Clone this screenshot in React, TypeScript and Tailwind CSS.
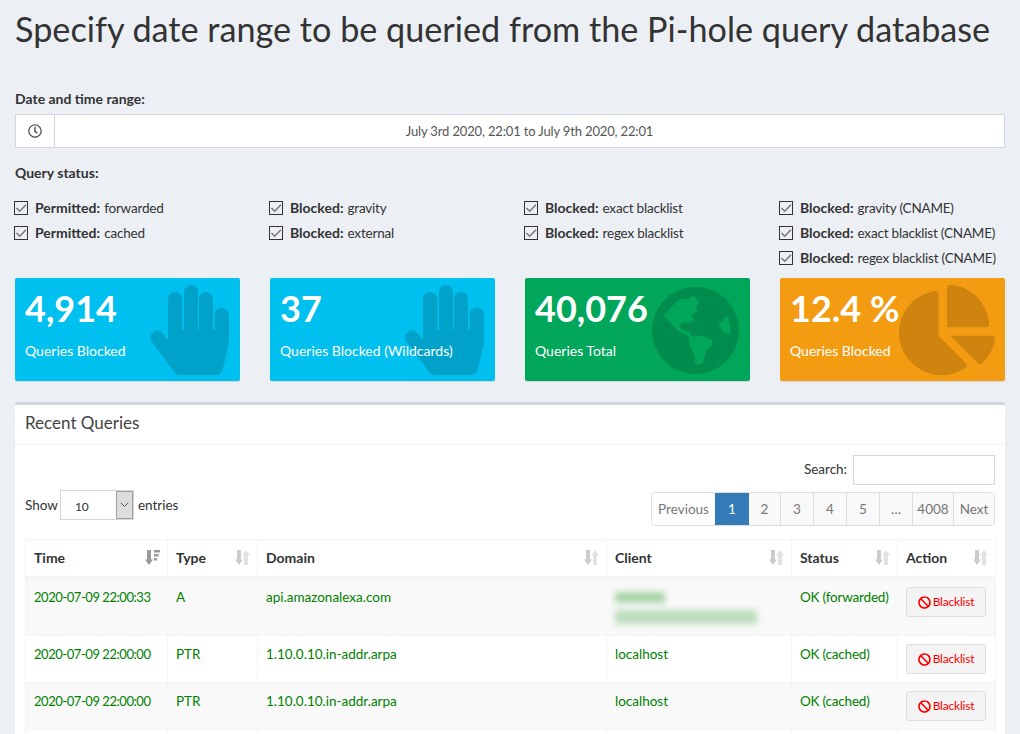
import { FaChartPie, FaRegClock, FaBan } from "react-icons/fa";

const checks = [
  [["Permitted:", "forwarded"], ["Permitted:", "cached"]],
  [["Blocked:", "gravity"], ["Blocked:", "external"]],
  [["Blocked:", "exact blacklist"], ["Blocked:", "regex blacklist"]],
  [["Blocked:", "gravity (CNAME)"], ["Blocked:", "exact blacklist (CNAME)"], ["Blocked:", "regex blacklist (CNAME)"]],
];

function Check({ bold, text }: { bold: string; text: string }) {
  return (
    <div className="flex h-[25px] items-center whitespace-nowrap">
      <span className="-ml-px mr-[7px] flex h-[14px] w-[14px] items-center justify-center border border-[#333]">
        <svg width="12" height="12" viewBox="0 0 12 12" fill="none">
          <path d="M1.500 6 L4.700 9.200 L11 2.800" stroke="#777" strokeWidth="1.500" />
        </svg>
      </span>
      <b className="mr-1 font-bold">{bold}</b>
      <span className="text-[13.5px] tracking-[-0.2px]">{text}</span>
    </div>
  );
}

function Hand() {
  return (
    <svg width="80" height="90" viewBox="0 0 80 90" className="absolute right-[10px] top-[7px]" fill="#000" opacity="0.15">
      <rect x="18" y="7" width="14.300" height="50" rx="7" />
      <rect x="34" y="0" width="14" height="50" rx="7" />
      <rect x="49" y="7" width="14" height="50" rx="7" />
      <rect x="64.700" y="22.700" width="14.300" height="40" rx="7" />
      <path d="M18 45H79V58L72.500 85Q71 90 66 90H30Q26 90 24 87L1.300 56Q-1.500 51 3 47Q8 43 12.300 47.700L18 55Z" />
    </svg>
  );
}

function Globe() {
  return (
    <svg width="87" height="87" viewBox="37 20 262 262" className="absolute right-[11px] top-[9px]" fill="#000" opacity="0.15">
      <path
        fillRule="evenodd"
        d="M168 20a131 131 0 1 0 .01 0Z M72 105L118 58L150 55L160 45L180 65L168 85L175 92L155 105L165 122L150 128L128 127L117 137L130 150L150 155L155 170L190 167L218 180L218 195L200 212L190 250L168 255L165 228L150 195L148 170L120 155L100 135Z M262 105L272 130L274 163L250 155L238 135Z"
      />
    </svg>
  );
}

function Card({ value, label, bg, icon }: { value: string; label: string; bg: string; icon: React.ReactNode }) {
  return (
    <div className={`relative h-[103px] overflow-hidden rounded-[2px] p-[10px] text-white shadow-[0_1px_1px_rgba(0,0,0,0.1)] ${bg}`}>
      <div className="relative z-10 whitespace-nowrap text-[36px] leading-[40px] font-bold">{value}</div>
      <div className="relative z-10 mt-[13px] whitespace-nowrap">{label}</div>
      {icon}
    </div>
  );
}

function Sort({ active }: { active?: boolean }) {
  return active ? (
    <svg width="15" height="15" viewBox="0 0 15 15" className="absolute right-[7px] top-[10px]" fill="#999">
      <path d="M2 0h4v9.500h2L4 15 0 9.500H2z" />
      <path d="M9 0h6v2.600H9zM9 4h4.500v2.600H9zM9 8h3v2.600H9z" />
    </svg>
  ) : (
    <svg width="15" height="15" viewBox="0 0 15 15" className="absolute right-[7px] top-[10px]">
      <path d="M2 0h4v9.500h2L4 15 0 9.500H2z" fill="#ccc" />
      <path d="M9 15h4V5.500h2L11 0 7 5.500H9z" fill="#e2e2e2" />
    </svg>
  );
}

const heads = [
  ["Time", "w-[142px]"],
  ["Type", "w-[90px]"],
  ["Domain", "w-[349px]"],
  ["Client", "w-[185px]"],
  ["Status", "w-[106px]"],
  ["Action", "w-[98px]"],
];

const rows = [
  { time: "2020-07-09 22:00:33", type: "A", domain: "api.amazonalexa.com", client: "", status: "OK (forwarded)" },
  { time: "2020-07-09 22:00:00", type: "PTR", domain: "1.10.0.10.in-addr.arpa", client: "localhost", status: "OK (cached)" },
  { time: "2020-07-09 22:00:00", type: "PTR", domain: "1.10.0.10.in-addr.arpa", client: "localhost", status: "OK (cached)" },
];

const pages = [
  ["2", "w-[32px]"],
  ["3", "w-[33px]"],
  ["4", "w-[33px]"],
  ["5", "w-[33px]"],
  ["…", "w-[33px]"],
  ["4008", "w-[41px]"],
];

const cell = "border border-[#f4f4f4] px-[8px] pt-[8px] align-top whitespace-nowrap";

export default function App() {
  return (
    <div className="h-[734px] overflow-hidden bg-[#ecf0f5] px-[15px] text-[14px] leading-[20px] text-[#333]" style={{ fontFamily: "Lato, 'Open Sans', sans-serif" }}>
      <h1 className="m-0 pt-[9px] text-[34.2px] leading-[40px] whitespace-nowrap font-normal">Specify date range to be queried from the Pi-hole query database</h1>

      <div className="mt-[40px] font-bold leading-[20px]">Date and time range:</div>
      <div className="mt-[5px] flex h-[34px] border border-[#d2d6de] bg-white">
        <div className="flex w-[39px] items-center justify-center border-r border-[#d2d6de] text-[#555]">
          <FaRegClock size={14} />
        </div>
        <div className="flex flex-1 items-center justify-center text-[13px] tracking-[-0.15px] text-[#555]">July 3rd 2020, 22:01 to July 9th 2020, 22:01</div>
      </div>

      <div className="mt-[15px] font-bold">Query status:</div>
      <div className="mt-[12px] grid h-[75px] grid-cols-4 gap-x-[30px]">
        {checks.map((col, i) => (
          <div key={i}>
            {col.map((c, j) => (
              <Check key={j} bold={c[0]} text={c[1]} />
            ))}
          </div>
        ))}
      </div>

      <div className="mt-[8px] grid grid-cols-4 gap-x-[30px]">
        <Card value="4,914" label="Queries Blocked" bg="bg-[#00c0ef]" icon={<Hand />} />
        <Card value="37" label="Queries Blocked (Wildcards)" bg="bg-[#00c0ef]" icon={<Hand />} />
        <Card value="40,076" label="Queries Total" bg="bg-[#00a65a]" icon={<Globe />} />
        <Card value="12.4 %" label="Queries Blocked" bg="bg-[#f39c12]" icon={<FaChartPie className="absolute right-[10px] top-[4px] text-black/15" size={96} />} />
      </div>

      <div className="mt-[21px] rounded-[3px] border-t-[3px] border-[#d2d6de] bg-white shadow-[0_1px_1px_rgba(0,0,0,0.1)]">
        <div className="flex h-[40px] items-center border-b border-[#f4f4f4] px-[10px] pb-[3px] text-[17px] text-[#444]">Recent Queries</div>
        <div className="px-[10px] pt-[10px]">
          <div className="flex h-[37px] items-start justify-end">
            <span className="mr-[6px] mt-[4px] text-[13.5px]">Search:</span>
            <div className="h-[30px] w-[142px] border border-[#d2d6de]" />
          </div>
          <div className="flex h-[34px] items-start justify-between">
            <div className="-mt-[2px] flex h-[30px] items-center text-[13.5px]">
              <span>Show</span>
              <div className="ml-[2px] mr-[4px] flex h-[30px] w-[74px] items-stretch border border-[#d2d6de] text-[12px]">
                <span className="flex-1 pl-[14px] pt-[6px]">10</span>
                <span className="flex w-[17px] items-center justify-center border border-[#a0a0a0] bg-[#ddd]">
                  <svg width="9" height="6" viewBox="0 0 9 6" fill="none"><path d="M.7.7 4.500 4.500 8.300.7" stroke="#555" /></svg>
                </span>
              </div>
              <span>entries</span>
            </div>
            <div className="flex h-[34px] overflow-hidden rounded-[4px] border border-[#ddd] text-[13.5px] text-[#777]">
              <span className="flex w-[63px] items-center justify-center bg-white">Previous</span>
              <span className="-my-px flex w-[34px] items-center justify-center bg-[#337ab7] text-white">1</span>
              {pages.map(([p, w]) => (
                <span key={p} className={`flex items-center justify-center border-r border-[#ddd] bg-[#f9f9f9] ${w}`}>{p}</span>
              ))}
              <span className="flex w-[40px] items-center justify-center bg-[#f9f9f9]">Next</span>
            </div>
          </div>

          <table className="mt-[13px] w-[970px] table-fixed border-collapse text-[14px]">
            <thead>
              <tr className="h-[38px] border-b-[3px] border-[#f4f4f4]">
                {heads.map(([h, w], i) => (
                  <th key={h} className={`relative border border-[#f4f4f4] px-[8px] text-left font-bold ${w}`}>
                    {h}
                    <Sort active={i === 0} />
                  </th>
                ))}
              </tr>
            </thead>
            <tbody className="text-[13.5px] text-[#008000]">
              {rows.map((r, i) => (
                <tr key={i} className={`${i % 2 === 0 ? "bg-[#f9f9f9]" : "bg-white"} ${i === 0 ? "h-[58px]" : "h-[47px]"}`}>
                  <td className={`${cell} text-[13px] tracking-[-0.45px]`}>{r.time}</td>
                  <td className={cell}>{r.type}</td>
                  <td className={cell}>{r.domain}</td>
                  <td className={cell}>
                    {r.client || (
                      <div className="pt-[5px] blur-[3px]">
                        <div className="h-[11px] w-[50px] bg-[#a9d3a9]" />
                        <div className="mt-[7px] h-[14px] w-[142px] bg-[#bcdcbc]" />
                      </div>
                    )}
                  </td>
                  <td className={`${cell} tracking-[-0.2px]`}>{r.status}</td>
                  <td className={cell}>
                    <div className="flex h-[30px] w-[80px] items-center justify-center gap-[2px] rounded-[3px] border border-[#ddd] bg-[#f4f4f4] text-[12px] tracking-[-0.2px] text-[#f00]">
                      <FaBan size={13} />
                      <span>Blacklist</span>
                    </div>
                  </td>
                </tr>
              ))}
              <tr className="h-[47px] bg-white">
                {heads.map(([h]) => (
                  <td key={h} className="border border-[#f4f4f4]" />
                ))}
              </tr>
            </tbody>
          </table>
        </div>
      </div>
    </div>
  );
}
